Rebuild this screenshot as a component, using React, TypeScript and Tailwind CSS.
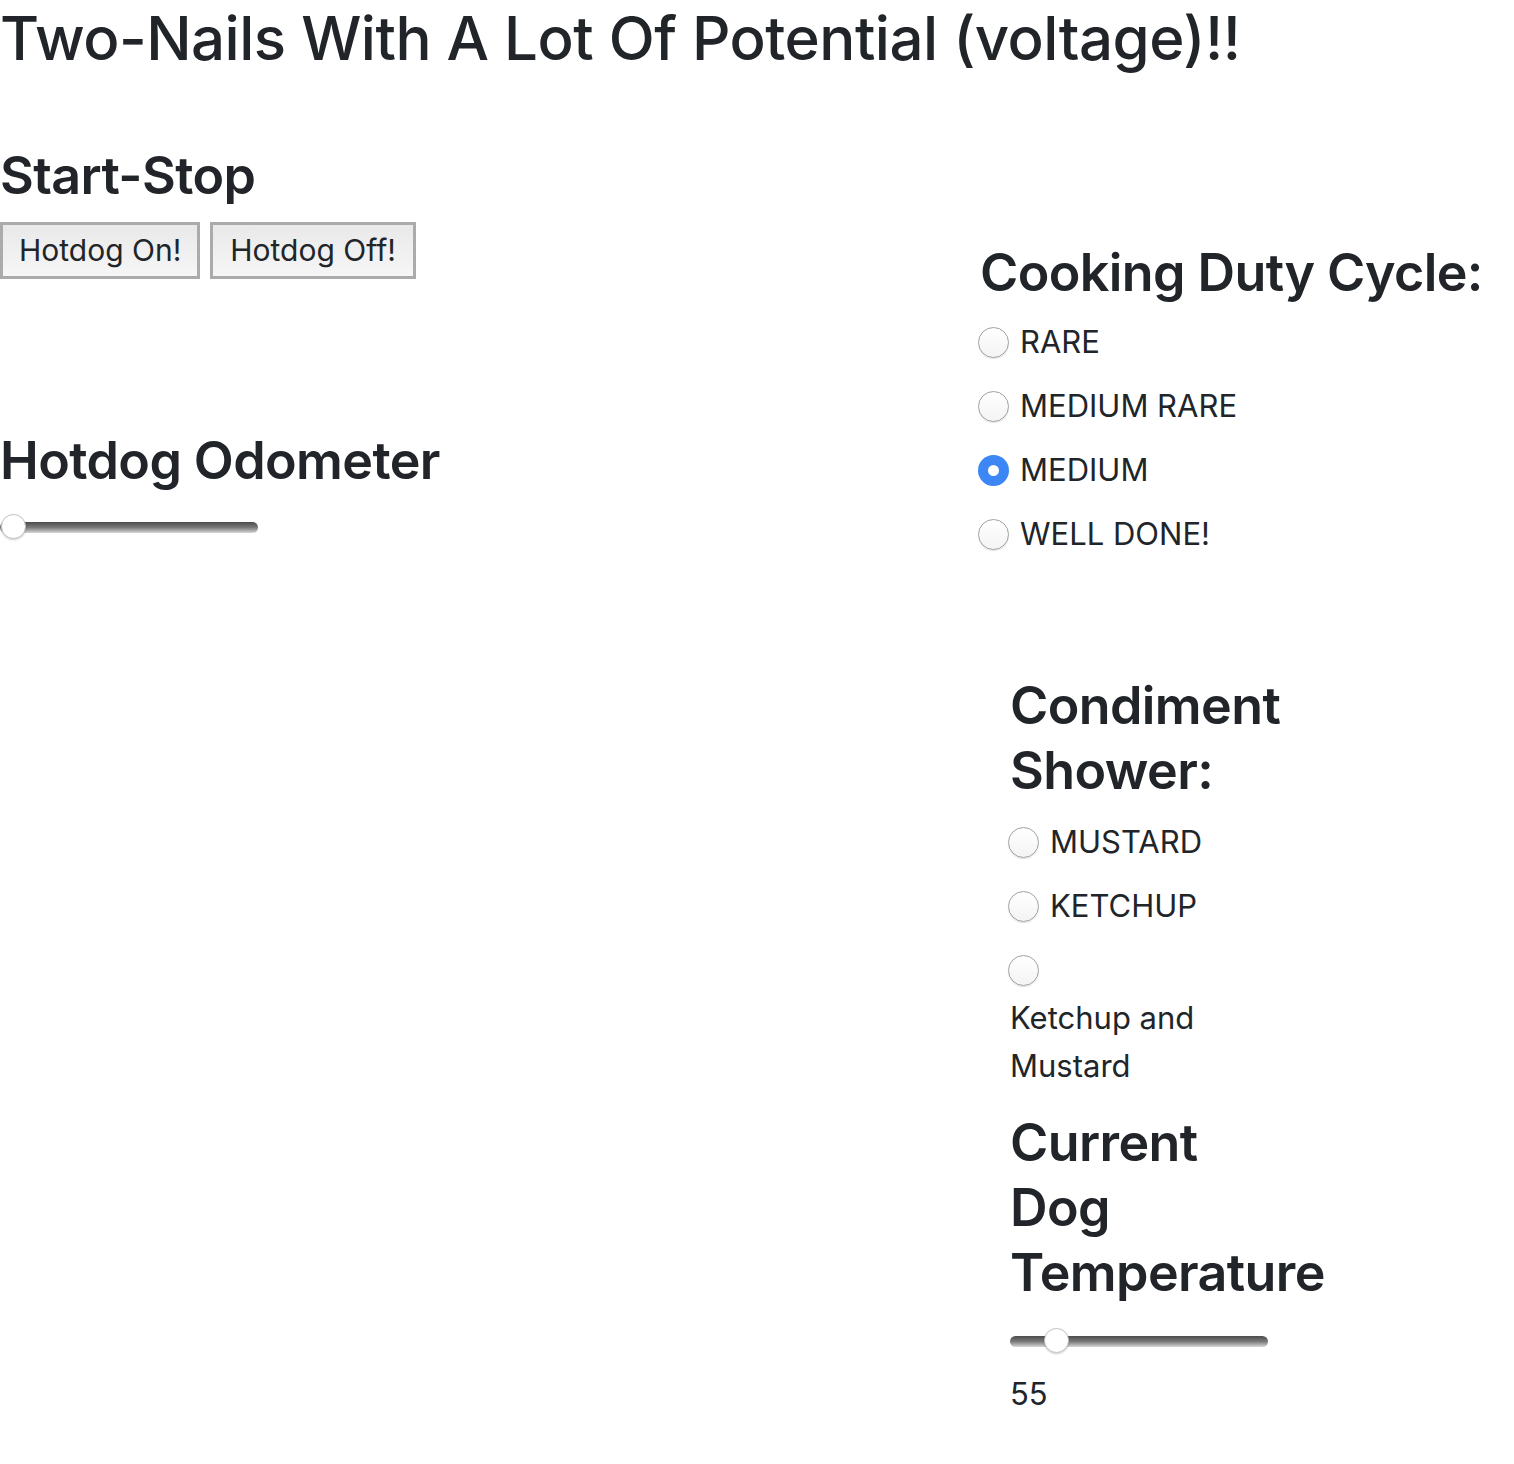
import React, { useState } from 'react';

const Radio: React.FC<{ checked?: boolean }> = ({ checked }) => (
  <span
    className={`inline-flex items-center justify-center w-[31px] h-[31px] rounded-full shrink-0 ${
      checked
        ? 'bg-[#3c86f6]'
        : 'bg-gradient-to-b from-white to-[#f4f4f4] border-[1.5px] border-[#a2a2a2] shadow-[0_1px_1px_rgba(0,0,0,0.12)]'
    }`}
  >
    {checked && <span className="w-[11px] h-[11px] rounded-full bg-white" />}
  </span>
);

const Slider: React.FC<{ offset: number }> = ({ offset }) => (
  <div className="relative w-[258px] h-[26px] flex items-center">
    <div className="w-full h-[11px] rounded-full bg-gradient-to-b from-[#4c4c4c] via-[#7a7a7a] to-[#d8d8d8]" />
    <span
      className="absolute top-[0px] w-[25px] h-[25px] rounded-full bg-white border border-[#c4c4c4] shadow-[0_1px_2px_rgba(0,0,0,0.2)]"
      style={{ left: `${offset}px` }}
    />
  </div>
);

const doneness = ['RARE', 'MEDIUM RARE', 'MEDIUM', 'WELL DONE!'];

export default function App() {
  const [cook, setCook] = useState('MEDIUM');
  const [sauce, setSauce] = useState<string | null>(null);

  return (
    <div className="min-h-screen bg-white text-[#212529] font-['Inter','Liberation_Sans',sans-serif]">
      <h1 className="text-[60px] leading-[77px] font-medium tracking-[-0.5px]">
        Two-Nails With A Lot Of Potential (voltage)!!
      </h1>

      <div className="flex mt-[66px]">
        <div className="w-[978px]">
          <h2 className="text-[52px] leading-[65px] font-semibold tracking-[-0.6px]">Start-Stop</h2>
          <div className="flex gap-[10px] mt-[14px]">
            <button className="h-[57px] px-[16px] text-[30px] border-[3px] border-[#ababab] bg-gradient-to-b from-[#e9e9e9] to-[#f6f6f6]">
              Hotdog On!
            </button>
            <button className="h-[57px] px-[17px] text-[30px] border-[3px] border-[#ababab] bg-gradient-to-b from-[#e9e9e9] to-[#f6f6f6]">
              Hotdog Off!
            </button>
          </div>
          <h2 className="text-[52px] leading-[65px] font-semibold tracking-[-0.6px] mt-[149px]">Hotdog Odometer</h2>
          <div className="mt-[21px]">
            <Slider offset={1} />
          </div>
        </div>

        <div className="pt-[97px]">
          <h2 className="text-[52px] leading-[65px] font-semibold tracking-[-0.6px] pl-[2px] whitespace-nowrap">
            Cooking Duty Cycle:
          </h2>
          <div className="mt-[13px] flex flex-col gap-[16px]">
            {doneness.map((d) => (
              <label key={d} className="flex items-center gap-[11px] h-[48px] text-[31px] cursor-pointer" onClick={() => setCook(d)}>
                <Radio checked={cook === d} />
                <span>{d}</span>
              </label>
            ))}
          </div>

          <div className="pl-[32px] w-[322px] mt-[115px]">
            <h2 className="text-[52px] leading-[65px] font-semibold tracking-[-0.6px]">Condiment Shower:</h2>
            <div className="mt-[15px] flex flex-col gap-[16px]">
              {['MUSTARD', 'KETCHUP'].map((s) => (
                <label key={s} className="flex items-center gap-[11px] h-[48px] text-[31px] -ml-[2px] cursor-pointer" onClick={() => setSauce(s)}>
                  <Radio checked={sauce === s} />
                  <span>{s}</span>
                </label>
              ))}
              <div className="text-[31px] leading-[48px] cursor-pointer" onClick={() => setSauce('BOTH')}>
                <div className="h-[48px] flex items-center -ml-[2px]">
                  <Radio checked={sauce === 'BOTH'} />
                </div>
                <span className="inline-block">Ketchup and Mustard</span>
              </div>
            </div>
            <h2 className="text-[52px] leading-[65px] font-semibold tracking-[-0.6px] mt-[20px]">Current Dog Temperature</h2>
            <div className="mt-[23px]">
              <Slider offset={34} />
            </div>
            <p className="text-[31px] leading-[48px] mt-[16px]">55</p>
          </div>
        </div>
      </div>
    </div>
  );
}
